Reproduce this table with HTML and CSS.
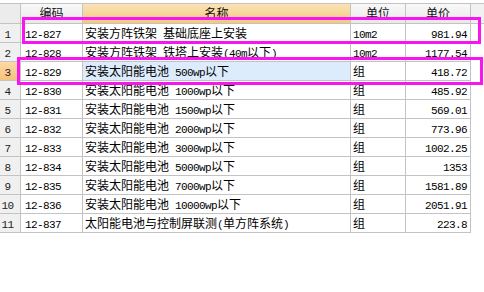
FILE: index.html
```html
<!DOCTYPE html>
<html lang="zh-CN">
<head>
<meta charset="utf-8">
<title>定额列表</title>
<link rel="stylesheet" href="styles.css">
</head>
<body>
<div class="sheet">
  <div class="row head">
    <div class="cell c0 hd"></div>
    <div class="cell c1 hd">编码</div>
    <div class="cell c2 hd sorted">名称</div>
    <div class="cell c3 hd">单位</div>
    <div class="cell c4 hd">单价</div>
    <div class="cell fill hd"></div>
  </div>
  <div class="row"><div class="cell c0 num"><span class="a">1</span></div><div class="cell c1 code"><span class="a">12-827</span></div><div class="cell c2 name">安装方阵铁架<span class="a"> </span>基础底座上安装</div><div class="cell c3 unit"><span class="a">10m2</span></div><div class="cell c4 price"><span class="a">981.94</span></div></div>
  <div class="row"><div class="cell c0 num"><span class="a">2</span></div><div class="cell c1 code"><span class="a">12-828</span></div><div class="cell c2 name">安装方阵铁架<span class="a"> </span>铁塔上安装<span class="a">(40m</span>以下<span class="a">)</span></div><div class="cell c3 unit"><span class="a">10m2</span></div><div class="cell c4 price"><span class="a">1177.54</span></div></div>
  <div class="row sel"><div class="cell c0 num"><span class="a">3</span></div><div class="cell c1 code"><span class="a">12-829</span></div><div class="cell c2 name">安装太阳能电池<span class="a"> 500wp</span>以下</div><div class="cell c3 unit">组</div><div class="cell c4 price"><span class="a">418.72</span></div></div>
  <div class="row"><div class="cell c0 num"><span class="a">4</span></div><div class="cell c1 code"><span class="a">12-830</span></div><div class="cell c2 name">安装太阳能电池<span class="a"> 1000wp</span>以下</div><div class="cell c3 unit">组</div><div class="cell c4 price"><span class="a">485.92</span></div></div>
  <div class="row"><div class="cell c0 num"><span class="a">5</span></div><div class="cell c1 code"><span class="a">12-831</span></div><div class="cell c2 name">安装太阳能电池<span class="a"> 1500wp</span>以下</div><div class="cell c3 unit">组</div><div class="cell c4 price"><span class="a">569.01</span></div></div>
  <div class="row"><div class="cell c0 num"><span class="a">6</span></div><div class="cell c1 code"><span class="a">12-832</span></div><div class="cell c2 name">安装太阳能电池<span class="a"> 2000wp</span>以下</div><div class="cell c3 unit">组</div><div class="cell c4 price"><span class="a">773.96</span></div></div>
  <div class="row"><div class="cell c0 num"><span class="a">7</span></div><div class="cell c1 code"><span class="a">12-833</span></div><div class="cell c2 name">安装太阳能电池<span class="a"> 3000wp</span>以下</div><div class="cell c3 unit">组</div><div class="cell c4 price"><span class="a">1002.25</span></div></div>
  <div class="row"><div class="cell c0 num"><span class="a">8</span></div><div class="cell c1 code"><span class="a">12-834</span></div><div class="cell c2 name">安装太阳能电池<span class="a"> 5000wp</span>以下</div><div class="cell c3 unit">组</div><div class="cell c4 price"><span class="a">1353</span></div></div>
  <div class="row"><div class="cell c0 num"><span class="a">9</span></div><div class="cell c1 code"><span class="a">12-835</span></div><div class="cell c2 name">安装太阳能电池<span class="a"> 7000wp</span>以下</div><div class="cell c3 unit">组</div><div class="cell c4 price"><span class="a">1581.89</span></div></div>
  <div class="row"><div class="cell c0 num"><span class="a">10</span></div><div class="cell c1 code"><span class="a">12-836</span></div><div class="cell c2 name">安装太阳能电池<span class="a"> 10000wp</span>以下</div><div class="cell c3 unit">组</div><div class="cell c4 price"><span class="a">2051.91</span></div></div>
  <div class="row"><div class="cell c0 num"><span class="a">11</span></div><div class="cell c1 code"><span class="a">12-837</span></div><div class="cell c2 name">太阳能电池与控制屏联测<span class="a">(</span>单方阵系统<span class="a">)</span></div><div class="cell c3 unit">组</div><div class="cell c4 price"><span class="a">223.8</span></div></div>

  <div class="mark mark1"></div>
  <div class="mark mark2"></div>
</div>
</body>
</html>
```

FILE: styles.css
```css
html, body {
  margin: 0;
  padding: 0;
  background: #ffffff;
  overflow: hidden;
}

body {
  font-family: "Noto Sans CJK SC", "Liberation Sans", sans-serif;
  font-size: 12px;
  color: #000000;
}

.sheet {
  position: relative;
  padding-top: 3px;
  width: 484px;
}

.row {
  display: flex;
  height: 19px;
}

.row.head {
  height: 21px;
}

.cell {
  box-sizing: border-box;
  height: 100%;
  border-right: 1px solid #c3c3c3;
  border-bottom: 1px solid #c3c3c3;
  line-height: 18px;
  white-space: nowrap;
  overflow: hidden;
}

.c0 { width: 21px; }
.c1 { width: 62px; }
.c2 { width: 268px; }
.c3 { width: 55px; }
.c4 { width: 65px; }
.fill { flex: 1; border-right: none; }

.hd {
  border-top: 1px solid #c3c3c3;
  background: linear-gradient(#f8f8f8, #e9e9e9);
  text-align: center;
  line-height: 17px;
  color: #111111;
}

.hd.c0 {
  background: #ececec;
}

.hd.sorted {
  background: linear-gradient(#fbe3b6, #f3c97f);
}

.hd.fill {
  background: #f1f1f1;
}

.a {
  font-family: "Liberation Mono", monospace;
  font-size: 11px;
  letter-spacing: -0.6px;
}

.num {
  background: #f0f0f0;
  text-align: center;
  padding-right: 5px;
  color: #222222;
}

.code {
  padding-left: 4px;
}

.name {
  padding-left: 2px;
}

.unit {
  padding-left: 2px;
}

.price {
  text-align: right;
  padding-right: 3px;
}

.sel .num {
  background: linear-gradient(#fbd9a8, #f6c27c);
}

.sel .name {
  background: #ddecfc;
}

.mark {
  position: absolute;
  box-sizing: border-box;
  border: 3px solid #fa14f0;
  pointer-events: none;
}

.mark1 {
  left: 22px;
  top: 17px;
  width: 459px;
  height: 27px;
}

.mark2 {
  left: 17px;
  top: 57px;
  width: 466px;
  height: 28px;
}
```
